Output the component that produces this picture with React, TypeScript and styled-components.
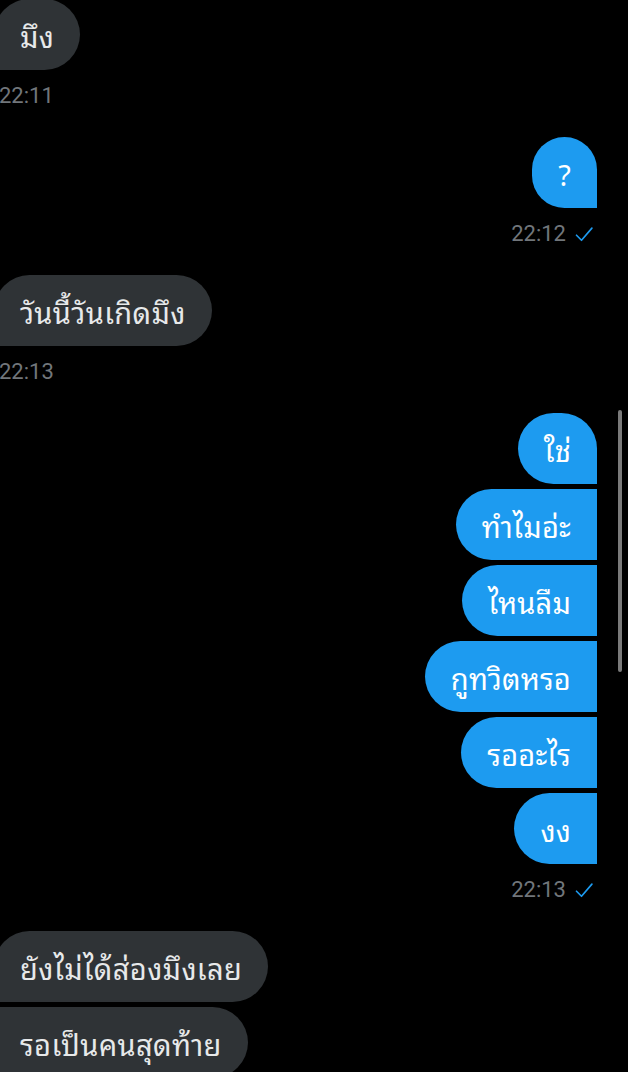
import styled, { createGlobalStyle } from "styled-components";

const GlobalStyle = createGlobalStyle`
  html, body {
    margin: 0;
    padding: 0;
    background: #000;
    overflow: hidden;
  }
  body {
    font-family: "Noto Sans Thai Looped", "Noto Serif Thai", "Loma", "Garuda", "Sarabun", "Noto Sans", "Noto Sans Thai", sans-serif;
  }
`;

type Side = "in" | "out";
type Pos = "single" | "first" | "middle" | "last";

interface IBubble {
  side: Side;
  pos: Pos;
}

const Screen = styled.div`
  position: relative;
  width: 628px;
  height: 1072px;
  overflow: hidden;
  background: #000;
`;

const Thread = styled.div`
  display: flex;
  flex-direction: column;
  margin: -1px 31px 0 -6px;
`;

const Group = styled.div<{ side: Side }>`
  display: flex;
  flex-direction: column;
  align-items: ${(p) => (p.side === "out" ? "flex-end" : "flex-start")};
  gap: 5px;
  margin-bottom: 28px;
`;

const radius = (side: Side, pos: Pos) => {
  const r = "36px";
  const s = "0";
  if (side === "out") {
    const tr = pos === "single" || pos === "first" ? r : s;
    return `${r} ${tr} ${s} ${r}`;
  }
  const tl = pos === "single" || pos === "first" ? r : s;
  return `${tl} ${r} ${r} ${s}`;
};

const Bubble = styled.div<IBubble>`
  box-sizing: border-box;
  height: 71px;
  display: flex;
  align-items: center;
  padding: 0 26px;
  font-size: 29px;
  letter-spacing: ${(p) => (p.side === "in" ? "0.4px" : "0.2px")};
  color: ${(p) => (p.side === "out" ? "#fff" : "#e7e9ea")};
  background: ${(p) => (p.side === "out" ? "#1d9bf0" : "#2f3336")};
  border-radius: ${(p) => radius(p.side, p.pos)};
  white-space: nowrap;
`;

const Meta = styled.div`
  display: flex;
  align-items: center;
  gap: 8px;
  margin-top: 8px;
  padding: 0 3px 0 5px;
  font-family: "Roboto", "Liberation Sans", sans-serif;
  font-size: 22px;
  line-height: 26px;
  color: #71767b;
`;

const Check = styled.svg`
  width: 20px;
  height: 20px;
  color: #1d9bf0;
`;

const Scrollbar = styled.div`
  position: absolute;
  right: 6px;
  top: 410px;
  width: 4px;
  height: 262px;
  border-radius: 2px;
  background: #7a7a7a;
`;

const groups: { side: Side; msgs: string[]; time?: string }[] = [
  { side: "in", msgs: ["มึง"], time: "22:11" },
  { side: "out", msgs: ["?"], time: "22:12" },
  { side: "in", msgs: ["วันนี้วันเกิดมึง"], time: "22:13" },
  {
    side: "out",
    msgs: ["ใช่", "ทำไมอ่ะ", "ไหนลืม", "กูทวิตหรอ", "รออะไร", "งง"],
    time: "22:13",
  },
  { side: "in", msgs: ["ยังไม่ได้ส่องมึงเลย", "รอเป็นคนสุดท้าย"] },
];

const posOf = (i: number, n: number): Pos =>
  n === 1 ? "single" : i === 0 ? "first" : i === n - 1 ? "last" : "middle";

const App = () => {
  return (
    <Screen>
      <GlobalStyle />
      <Thread>
        {groups.map((g, gi) => (
          <Group key={gi} side={g.side}>
            {g.msgs.map((m, i) => (
              <Bubble key={i} side={g.side} pos={posOf(i, g.msgs.length)}>
                {m}
              </Bubble>
            ))}
            {g.time && (
              <Meta>
                <span>{g.time}</span>
                {g.side === "out" && (
                  <Check viewBox="0 0 24 24" fill="none">
                    <path
                      d="M3 13.5l6 6L21.5 5"
                      stroke="currentColor"
                      strokeWidth="2"
                      strokeLinecap="round"
                      strokeLinejoin="round"
                    />
                  </Check>
                )}
              </Meta>
            )}
          </Group>
        ))}
      </Thread>
      <Scrollbar />
    </Screen>
  );
};

export default App;
